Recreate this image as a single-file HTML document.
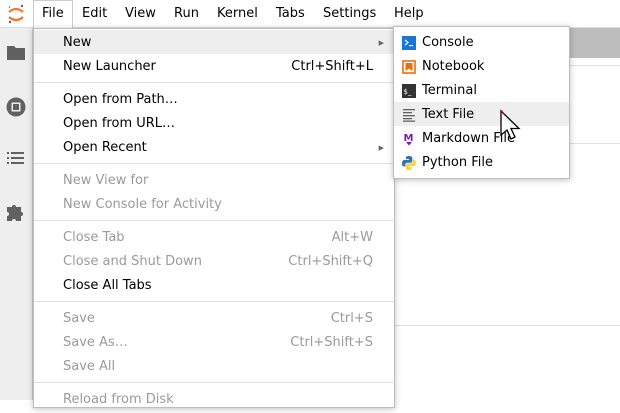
<!DOCTYPE html>
<html><head><meta charset="utf-8"><style>
*{margin:0;padding:0;box-sizing:border-box}
body{width:620px;height:400px;overflow:hidden;background:#fff;font-family:"DejaVu Sans","Liberation Sans",sans-serif;font-size:13px;color:#000;position:relative}
.bar{position:absolute;left:0;top:0;width:620px;height:28px;background:#fff;border-bottom:1px solid #ddd}
.bar span{position:absolute;top:6px}
.side{position:absolute;left:0;top:28px;width:33px;height:372px;background:#eee;border-right:1px solid #ccc}
.menu{position:absolute;left:33px;top:28px;width:362px;height:380px;background:#fff;border:1px solid #bdbdbd;box-shadow:0 1px 6px rgba(0,0,0,.25)}
.it{position:absolute;left:0;width:360px;height:24px;line-height:26px;padding-left:29px}
.it .k{position:absolute;right:21px;top:0}
.dis{color:#9a9a9a}
.sep{position:absolute;left:0;width:360px;height:1px;background:#e0e0e0}
.sub{position:absolute;left:393px;top:26px;width:177px;height:153px;background:#fff;border:1px solid #bdbdbd;box-shadow:0 1px 6px rgba(0,0,0,.25)}
.sit{position:absolute;left:0;width:175px;height:24px;line-height:26px;padding-left:28px}
.ic{position:absolute;left:8px;top:6px;width:14px;height:14px}
.ar{position:absolute;right:10px;top:0;font-size:7px;color:#666}
</style></head><body>
<div class="bar">
<svg style="position:absolute;left:6px;top:3px" width="20" height="22" viewBox="0 0 20 22"><path d="M3 9 Q10 3 17 9" stroke="#f37726" stroke-width="2.2" fill="none"/><path d="M3 14 Q10 20 17 14" stroke="#f37726" stroke-width="2.2" fill="none"/><circle cx="16" cy="3" r="1.2" fill="#616161"/><circle cx="4" cy="19" r="1.2" fill="#616161"/><circle cx="3.5" cy="4" r="0.8" fill="#616161"/></svg>
<div style="position:absolute;left:33px;top:0;width:40px;height:29px;background:#fff;border:1px solid #ccc;border-bottom:none"></div>
<span style="left:42px">File</span><span style="left:82px">Edit</span><span style="left:125px">View</span><span style="left:174px">Run</span><span style="left:217px">Kernel</span><span style="left:276px">Tabs</span><span style="left:323px">Settings</span><span style="left:394px">Help</span>
</div>
<div class="side">
<svg style="position:absolute;left:7px;top:17px" width="18" height="15" viewBox="0 0 18 15"><path d="M0 1h7l2 2h9v12H0z" fill="#616161"/></svg>
<svg style="position:absolute;left:6px;top:69px" width="20" height="20"><circle cx="10" cy="10" r="9.5" fill="#616161"/><rect x="5.5" y="5.5" width="9" height="9" fill="#eee"/><rect x="7" y="7" width="6" height="6" fill="#616161"/></svg>
<svg style="position:absolute;left:7px;top:124px" width="18" height="14"><g fill="#616161"><rect x="0" y="0" width="2" height="2"/><rect x="4" y="0" width="13" height="2"/><rect x="0" y="5" width="2" height="2"/><rect x="4" y="5" width="13" height="2"/><rect x="0" y="10" width="2" height="2"/><rect x="4" y="10" width="13" height="2"/></g></svg>
<svg style="position:absolute;left:7px;top:175px" width="18" height="18" viewBox="0 0 18 18"><path d="M0 4h5a2 2 0 1 1 4 0h5v5a2 2 0 1 1 0 4v5H9a2 2 0 1 0-4 0H0v-5a2 2 0 1 0 0-4z" fill="#616161"/></svg>
</div>
<div style="position:absolute;left:395px;top:28px;width:225px;height:30px;background:#bdbdbd"></div>
<div style="position:absolute;left:395px;top:65px;width:225px;height:1px;background:#e0e0e0"></div>
<div style="position:absolute;left:395px;top:143px;width:225px;height:1px;background:#e0e0e0"></div>
<div style="position:absolute;left:395px;top:325px;width:225px;height:1px;background:#e0e0e0"></div>
<div class="menu">
<div class="it" style="top:1px;background:#eee">New<span class="ar">▶</span></div>
<div class="it" style="top:25px">New Launcher<span class="k">Ctrl+Shift+L</span></div>
<div class="sep" style="top:53px"></div>
<div class="it" style="top:58px">Open from Path…</div>
<div class="it" style="top:82px">Open from URL…</div>
<div class="it" style="top:106px">Open Recent<span class="ar">▶</span></div>
<div class="sep" style="top:134px"></div>
<div class="it dis" style="top:139px">New View for</div>
<div class="it dis" style="top:163px">New Console for Activity</div>
<div class="sep" style="top:191px"></div>
<div class="it dis" style="top:196px">Close Tab<span class="k">Alt+W</span></div>
<div class="it dis" style="top:220px">Close and Shut Down<span class="k">Ctrl+Shift+Q</span></div>
<div class="it" style="top:244px">Close All Tabs</div>
<div class="sep" style="top:272px"></div>
<div class="it dis" style="top:277px">Save<span class="k">Ctrl+S</span></div>
<div class="it dis" style="top:301px">Save As…<span class="k">Ctrl+Shift+S</span></div>
<div class="it dis" style="top:325px">Save All</div>
<div class="sep" style="top:353px"></div>
<div class="it dis" style="top:358px">Reload from Disk</div>
</div>
<div class="sub">
<div class="sit" style="top:3px"><svg class="ic" viewBox="0 0 14 14"><rect width="14" height="14" fill="#1976d2"/><path d="M3 4l3 2.5-3 2.5" stroke="#fff" stroke-width="1.2" fill="none"/><rect x="7" y="9" width="4" height="1.2" fill="#fff"/></svg>Console</div>
<div class="sit" style="top:27px"><svg class="ic" viewBox="0 0 14 14"><rect width="14" height="14" fill="#ef8a3c"/><rect x="2" y="2" width="10" height="10" fill="#fff"/><path d="M3.5 3h7v8L7 8.5 3.5 11z" fill="#ef6c00"/></svg>Notebook</div>
<div class="sit" style="top:51px"><svg class="ic" viewBox="0 0 14 14"><rect width="14" height="14" fill="#333"/><text x="1.5" y="10" font-size="7" fill="#fff" font-family="DejaVu Sans">$_</text></svg>Terminal</div>
<div class="sit" style="top:75px;background:#eee"><svg class="ic" viewBox="0 0 14 14"><g fill="#616161"><rect x="1" y="1" width="12" height="1.3"/><rect x="1" y="4" width="9" height="1.3"/><rect x="1" y="7" width="12" height="1.3"/><rect x="1" y="10" width="9" height="1.3"/><rect x="1" y="12.5" width="12" height="1.3"/></g></svg>Text File</div>
<div class="sit" style="top:99px"><svg class="ic" viewBox="0 0 14 14"><text x="1.5" y="9" font-size="10" font-weight="bold" fill="#7b1fa2" font-family="DejaVu Sans">M</text><path d="M4 10h6l-3 3.5z" fill="#7b1fa2"/></svg>Markdown File</div>
<div class="sit" style="top:123px"><svg class="ic" viewBox="0 0 14 14"><path d="M7 0C3.5 0 4 1.5 4 1.5V3h3v1H2.5S0 3.8 0 7.2 2 10.5 2 10.5h1.3V8.8S3.2 6.8 5.3 6.8h3s2 0 2-1.9V1.8S10.6 0 7 0z" fill="#3572a5"/><path d="M7 14c3.5 0 3-1.5 3-1.5V11H7v-1h4.5S14 10.2 14 6.8 12 3.5 12 3.5h-1.3v1.7s.1 2-2 2h-3s-2 0-2 1.9v3.1S3.4 14 7 14z" fill="#ffd43b"/></svg>Python File</div>
</div>
<svg style="position:absolute;left:499px;top:109px" width="24" height="34" viewBox="0 0 24 34"><path d="M2 2v24l6-5 4 9 4-2-4-8.5h8z" fill="#fff" stroke="#000" stroke-width="1.3"/><circle cx="2.5" cy="2.5" r="1.3" fill="#c00"/></svg>
</body></html>
